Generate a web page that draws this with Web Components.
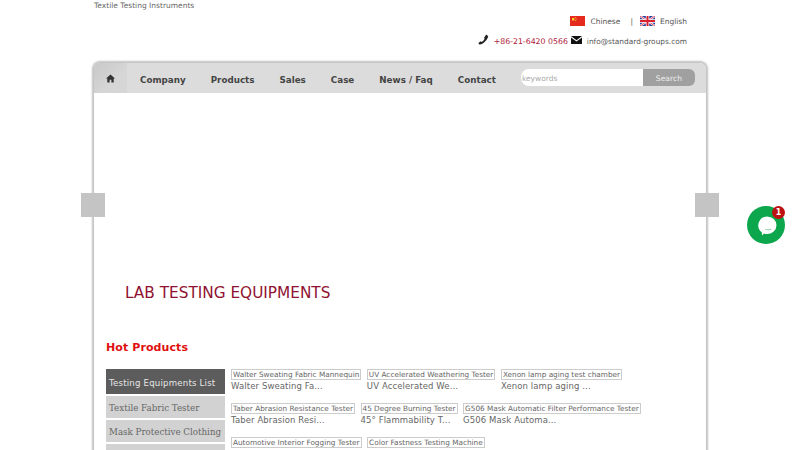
<!DOCTYPE html>
<html lang="en">
<head>
<meta charset="utf-8">
<title>Textile Testing Instruments</title>
<style>
	html, body { margin: 0; height: 450px; overflow: hidden; background: #fff; }
	body { font-family: "DejaVu Sans", Verdana, sans-serif; color: #555; }
</style>
</head>
<body>
<site-header></site-header>
<main-frame>
	<nav-bar></nav-bar>
	<hero-banner>LAB TESTING EQUIPMENTS</hero-banner>
	<hot-products></hot-products>
</main-frame>
<chat-widget></chat-widget>

<script>
//////////////////////////////////////////// Header ////////////////////////////////////////////
class SiteHeader extends HTMLElement {
	constructor(...args) {
		super(...args);
		this._shadow = this.attachShadow({ mode: 'open' });
		this._shadow.innerHTML = `
		<style>
			:host { display: block; width: 612px; height: 63px; margin: 0 auto; font-size: 7.5px; color: #555; }
			.tag { height: 15px; line-height: 11px; color: #666; }
			.line { display: flex; justify-content: flex-end; align-items: center; padding-right: 19px; }
			.langs { height: 12px; margin-bottom: 8px; }
			.contact { height: 12px; }
			.flag { display: block; width: 15px; height: 10px; margin-right: 5px; }
			.sep { margin: 0 7px 0 10px; }
			.tel { color: #b0223c; font-size: 7.8px; margin: 0 3px 0 5px; }
			.mail { margin-left: 5px; font-size: 7.4px; }
			svg { display: block; }
		</style>
		<div class="tag">Textile Testing Instruments</div>
		<div class="line langs">
			<svg class="flag" viewBox="0 0 15 10">
				<rect width="15" height="10" fill="#e4291d"/>
				<rect x="2" y="2" width="2.4" height="2.4" fill="#f6d32a"/>
				<circle cx="5.4" cy="1.6" r=".5" fill="#f6d32a"/><circle cx="6.2" cy="3" r=".5" fill="#f6d32a"/>
				<circle cx="5.6" cy="4.6" r=".5" fill="#f6d32a"/>
			</svg>
			<span>Chinese</span>
			<span class="sep">|</span>
			<svg class="flag" viewBox="0 0 15 10">
				<rect width="15" height="10" fill="#2b3f9e"/>
				<path d="M0 0 15 10M15 0 0 10" stroke="#fff" stroke-width="2"/>
				<path d="M0 0 15 10M15 0 0 10" stroke="#d8202f" stroke-width=".8"/>
				<path d="M7.500 0V10M0 5H15" stroke="#fff" stroke-width="3.4"/>
				<path d="M7.500 0V10M0 5H15" stroke="#d8202f" stroke-width="2"/>
			</svg>
			<span>English</span>
		</div>
		<div class="line contact">
			<svg width="11" height="11" viewBox="0 0 12 12" style="margin-top:-4px"><path d="M9 .6 11.2 2.400 10.400 4.600C8.600 7.600 6.600 9.800 3.600 11.200L1.400 11.400.4 9.800 3 8 4.200 8.800C5.600 7.800 6.600 6.600 7.200 5.200L6.600 4 9 .6Z" fill="#222"/></svg>
			<span class="tel">+86-21-6420 0566</span>
			<svg width="11" height="8" viewBox="0 0 11 8" style="margin-top:-2px"><path d="M0 0H11L5.500 4.200ZM0 1.400V8H11V1.400L5.500 5.600Z" fill="#111"/></svg>
			<span class="mail">info@standard-groups.com</span>
		</div>`;
	}
}
customElements.define("site-header", SiteHeader);

//////////////////////////////////////////// Frame /////////////////////////////////////////////
class MainFrame extends HTMLElement {
	constructor(...args) {
		super(...args);
		this._shadow = this.attachShadow({ mode: 'open' });
		this._shadow.innerHTML = `
		<style>
			:host { display: block; width: 612px; margin: 0 auto; height: 420px; background: #fff;
				border-radius: 6px 6px 0 0; box-shadow: 0 0 2px 2px #c2c2c2; position: relative; }
			.arrow { position: absolute; top: 130px; width: 24px; height: 24px; background: #c4c4c4; }
			.prev { left: -13px; }
			.next { right: -13px; }
		</style>
		<slot></slot>
		<div class="arrow prev"></div>
		<div class="arrow next"></div>`;
	}
}
customElements.define("main-frame", MainFrame);

///////////////////////////////////////////// Nav //////////////////////////////////////////////
class NavBar extends HTMLElement {
	constructor(...args) {
		super(...args);
		this._shadow = this.attachShadow({ mode: 'open' });
		const items = ["Company", "Products", "Sales", "Case", "News / Faq", "Contact"];
		this._shadow.innerHTML = `
		<style>
			:host { display: flex; align-items: center; height: 30px; background: #dcdcdc; border-radius: 6px 6px 0 0;
				font-size: 8.75px; font-weight: bold; color: #444; }
			.home { display: flex; align-items: center; justify-content: center; align-self: stretch; width: 33px;
				background: linear-gradient(135deg, #c8c8c8, #d6d6d6 60%); border-radius: 6px 0 0 0; }
			.home svg { margin-top: 1px; }
			ul { display: flex; gap: 25px; margin: 3px 0 0 13px; padding: 0; list-style: none; white-space: nowrap; }
			.search { display: flex; margin-left: 25px; height: 17px; margin-top: -1px; }
			.search input { width: 122px; height: 17px; box-sizing: border-box; border: 0; padding: 1px 1px 0; margin: 0; background: #fff;
				border-radius: 8px 0 0 8px; font: 7.5px "DejaVu Sans", sans-serif; color: #999; outline: 0; }
			.search input::placeholder { color: #aaa; opacity: 1; }
			.search button { width: 52px; height: 17px; border: 0; padding: 1px 0 0; background: #a0a0a0; color: #eee;
				border-radius: 0 6px 6px 0; font: 7.6px "DejaVu Sans", sans-serif; }
		</style>
		<div class="home">
			<svg width="9" height="9" viewBox="0 0 9 9"><path d="M4.500.4 9 4.600H7.700V8.600H5.400V5.800H3.600V8.600H1.300V4.600H0Z" fill="#333"/></svg>
		</div>
		<ul>${items.map(i => `<li>${i}</li>`).join("")}</ul>
		<div class="search">
			<input placeholder="keywords">
			<button>Search</button>
		</div>`;
	}
}
customElements.define("nav-bar", NavBar);

//////////////////////////////////////////// Banner ////////////////////////////////////////////
class HeroBanner extends HTMLElement {
	constructor(...args) {
		super(...args);
		this._shadow = this.attachShadow({ mode: 'open' });
		this._shadow.innerHTML = `
		<style>
			:host { display: block; height: 231px; box-sizing: border-box; padding: 190px 0 0 31px;
				font-size: 15.3px; line-height: 20px; color: #8f1230; }
		</style>
		<slot></slot>`;
	}
}
customElements.define("hero-banner", HeroBanner);

/////////////////////////////////////////// Products ///////////////////////////////////////////
class ProductCard extends HTMLElement {
	constructor(...args) {
		super(...args);
		this._shadow = this.attachShadow({ mode: 'open' });
		this._shadow.innerHTML = `
		<style>
			:host { display: block; font-size: 8.5px; line-height: 11px; color: #666; letter-spacing: .1px; }
			.thumb { display: inline-block; box-sizing: border-box; height: 11px; line-height: 9px; padding: 0 1px;
				border: 1px solid #ccc; font-size: 7.3px; letter-spacing: 0; white-space: nowrap; vertical-align: top; }
			.name { height: 12px; line-height: 12px; white-space: nowrap; }
		</style>
		<div><span class="thumb">${this.getAttribute("title")}</span></div>
		<div class="name">${this.getAttribute("name") || ""}</div>`;
	}
}
customElements.define("product-card", ProductCard);

class HotProducts extends HTMLElement {
	constructor(...args) {
		super(...args);
		this._shadow = this.attachShadow({ mode: 'open' });
		const rows = [
			[["Walter Sweating Fabric Mannequin", "Walter Sweating Fa..."], ["UV Accelerated Weathering Tester", "UV Accelerated We..."], ["Xenon lamp aging test chamber", "Xenon lamp aging ..."]],
			[["Taber Abrasion Resistance Tester", "Taber Abrasion Resi..."], ["45 Degree Burning Tester", "45° Flammability T..."], ["G506 Mask Automatic Filter Performance Tester", "G506 Mask Automa..."]],
			[["Automotive Interior Fogging Tester", ""], ["Color Fastness Testing Machine", ""]]
		];
		this._shadow.innerHTML = `
		<style>
			:host { display: block; padding-left: 12px; }
			h2 { margin: 0; height: 29px; padding-top: 16px; font-size: 11px; line-height: 16px; color: #e01010; letter-spacing: .1px; }
			.body { display: flex; gap: 6px; }
			.menu { width: 119px; display: flex; flex-direction: column; gap: 2px; }
			.menu div { background: #d2d2d2; color: #666; font: 8.7px/24px "DejaVu Serif", serif; height: 22px; padding-left: 3px; white-space: nowrap; }
			.menu .head { background: #5c5c5c; color: #e6e6e6; font: 8.6px/28px "DejaVu Sans", sans-serif; height: 25px; letter-spacing: .2px; }
			.grid { display: flex; flex-direction: column; gap: 11px; }
			.row { display: flex; gap: 5.5px; height: 23px; }
		</style>
		<h2>Hot Products</h2>
		<div class="body">
			<div class="menu">
				<div class="head">Testing Equipments List</div>
				<div>Textile Fabric Tester</div>
				<div>Mask Protective Clothing</div>
				<div></div>
			</div>
			<div class="grid">
				${rows.map(r => `<div class="row">${r.map(c => `<product-card title="${c[0]}" name="${c[1]}"></product-card>`).join("")}</div>`).join("")}
			</div>
		</div>`;
	}
}
customElements.define("hot-products", HotProducts);

///////////////////////////////////////////// Chat /////////////////////////////////////////////
class ChatWidget extends HTMLElement {
	constructor(...args) {
		super(...args);
		this._shadow = this.attachShadow({ mode: 'open' });
		this._shadow.innerHTML = `
		<style>
			:host { position: fixed; left: 747px; top: 206px; width: 38px; height: 38px; border-radius: 50%; background: #0ca64c; display: block; }
			svg { position: absolute; left: 10px; top: 10px; }
			.badge { position: absolute; right: 0; top: 0; width: 13px; height: 13px; border-radius: 50%; background: #bd1010;
				color: #fff; font: bold 8px/13px "DejaVu Sans", sans-serif; text-align: center; }
		</style>
		<svg width="20" height="20" viewBox="0 0 20 20">
			<path d="M10 .5a9.500 8.800 0 0 1 0 17.600c-1 0-2-.1-3-.5L5 19.500l-.2-3.200A8.800 8.800 0 0 1 10 .5Z" fill="#fff"/>
			<path d="M8 13c2 1 4.500 1 6.500 0-.5 1.600-6 1.600-6.500 0Z" fill="#0ca64c"/>
		</svg>
		<div class="badge">1</div>`;
	}
}
customElements.define("chat-widget", ChatWidget);
</script>
</body>
</html>
